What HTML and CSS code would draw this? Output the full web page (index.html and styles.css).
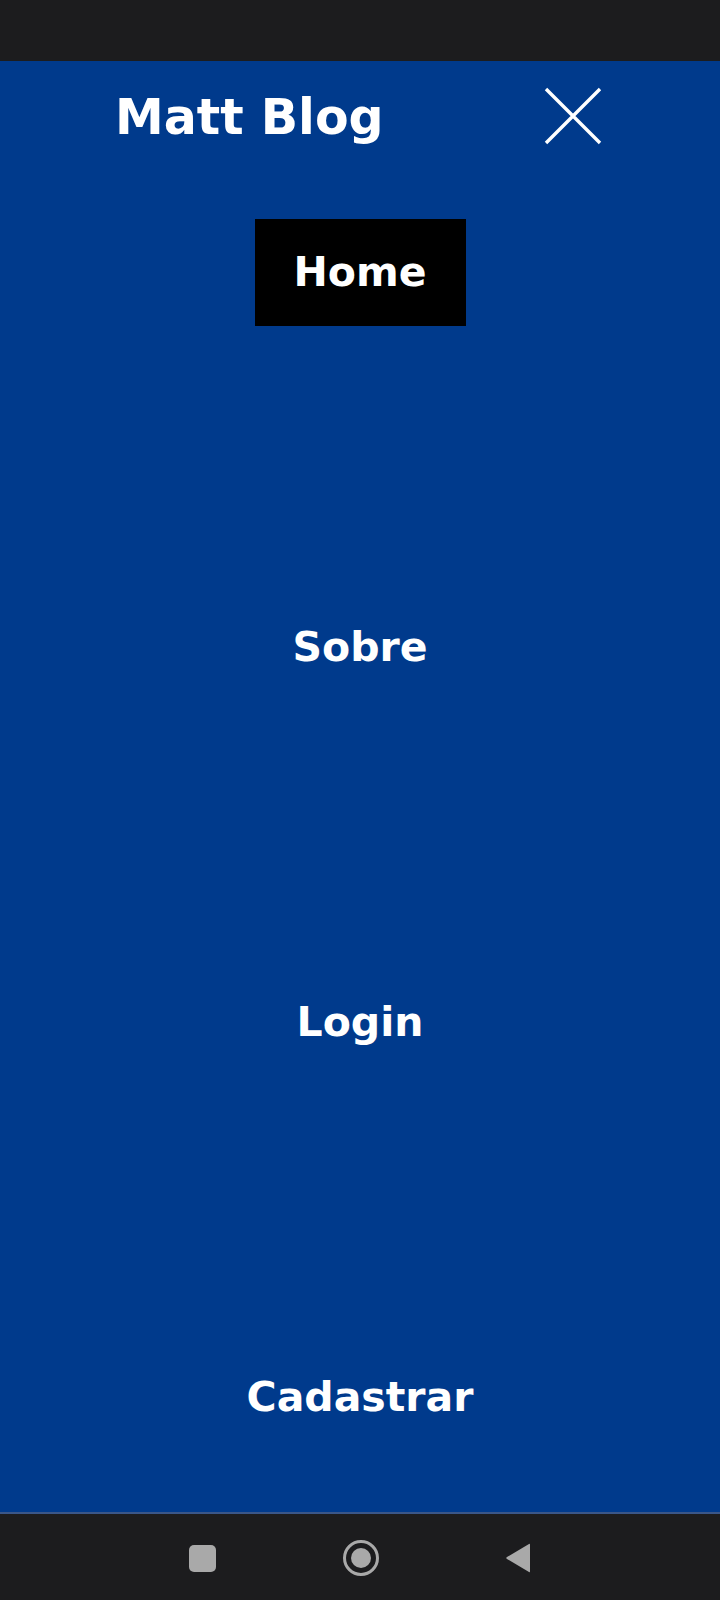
FILE: index.html
```html
<!DOCTYPE html>
<html lang="pt">
<head>
<meta charset="utf-8">
<title>Matt Blog</title>
<link rel="stylesheet" href="styles.css">
</head>
<body>
<div class="status-bar"></div>
<main class="menu">
  <header class="menu-header">
    <h1 class="brand">Matt Blog</h1>
    <button class="close-btn" aria-label="Fechar">
      <svg viewBox="0 0 58 58" width="58" height="58"><path d="M2 2 L56 56 M56 2 L2 56" stroke="#fff" stroke-width="3.4" fill="none"/></svg>
    </button>
  </header>
  <nav class="nav">
    <a class="nav-link active" href="#">Home</a>
    <a class="nav-link" href="#">Sobre</a>
    <a class="nav-link" href="#">Login</a>
    <a class="nav-link" href="#">Cadastrar</a>
  </nav>
</main>
<div class="system-nav">
  <span class="sys-square"></span>
  <span class="sys-home"><span class="sys-home-dot"></span></span>
  <svg class="sys-back" viewBox="0 0 26 32" width="26" height="32"><path d="M24 2 Q25 1 25 3 L25 29 Q25 31 24 30 L2 17 Q0.5 16 2 15 Z" fill="#a9a9a9"/></svg>
</div>
</body>
</html>
```
FILE: styles.css
```css
* { box-sizing: border-box; }
html, body { margin: 0; padding: 0; }
body {
  width: 720px;
  height: 1600px;
  display: flex;
  flex-direction: column;
  background: #1c1c1e;
  font-family: "DejaVu Sans", "Open Sans", sans-serif;
  color: #fff;
}
.status-bar {
  height: 61px;
  background: #1c1c1e;
  flex: none;
}
.menu {
  flex: 1;
  background: #003a8c;
  display: flex;
  flex-direction: column;
  border-bottom: 2px solid #3a5688;
}
.menu-header {
  display: flex;
  justify-content: space-between;
  align-items: center;
  padding: 25px 118px 0 115px;
}
.brand {
  margin: 0;
  font-size: 49px;
  font-weight: 700;
  line-height: 64px;
}
.close-btn {
  background: none;
  border: 0;
  padding: 0;
  width: 58px;
  height: 58px;
  display: block;
  margin-top: -5px;
}
.close-btn svg { display: block; }
.nav {
  display: flex;
  flex-direction: column;
  align-items: center;
  gap: 268px;
  padding-top: 69px;
}
.nav-link {
  display: block;
  color: #fff;
  text-decoration: none;
  font-size: 41px;
  font-weight: 700;
  line-height: 107px;
  height: 107px;
}
.nav-link.active {
  background: #000;
  width: 211px;
  text-align: center;
}
.system-nav {
  height: 86px;
  flex: none;
  display: flex;
  align-items: center;
  justify-content: center;
  padding-top: 2px;
}
.sys-square {
  width: 27px;
  height: 27px;
  border-radius: 5px;
  background: #a9a9a9;
  margin-right: 127px;
}
.sys-home {
  width: 36px;
  height: 36px;
  border-radius: 50%;
  border: 3px solid #a9a9a9;
  display: flex;
  align-items: center;
  justify-content: center;
  margin-right: 126px;
}
.sys-home-dot {
  width: 20px;
  height: 20px;
  border-radius: 50%;
  background: #a9a9a9;
}
.sys-back { display: block; }
```
